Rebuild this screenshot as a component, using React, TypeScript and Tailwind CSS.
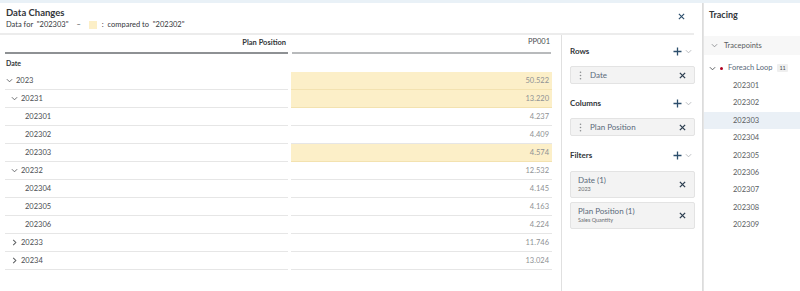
import React from "react";

const Chevron = ({ dir = "down", className = "" }: { dir?: "down" | "right"; className?: string }) => (
  <svg width="7" height="7" viewBox="0 0 8 8" className={className}>
    {dir === "down" ? (
      <path d="M1 2.5 L4 5.5 L7 2.5" fill="none" stroke="currentColor" strokeWidth="1" />
    ) : (
      <path d="M2.5 1 L5.5 4 L2.5 7" fill="none" stroke="currentColor" strokeWidth="1.2" />
    )}
  </svg>
);

const XIcon = ({ size = 7, w = 1.4 }: { size?: number; w?: number }) => (
  <svg width={size} height={size} viewBox="0 0 8 8">
    <path d="M1 1 L7 7 M7 1 L1 7" stroke="currentColor" strokeWidth={w} fill="none" />
  </svg>
);

const Plus = () => (
  <svg width="9" height="9" viewBox="0 0 9 9">
    <path d="M4.5 0.5 V8.5 M0.5 4.5 H8.5" stroke="currentColor" strokeWidth="1.3" fill="none" />
  </svg>
);

const Grip = () => (
  <svg width="3" height="9" viewBox="0 0 3 9">
    <circle cx="1.5" cy="1.2" r="0.8" fill="#8a8d90" />
    <circle cx="1.5" cy="4.5" r="0.8" fill="#8a8d90" />
    <circle cx="1.5" cy="7.8" r="0.8" fill="#8a8d90" />
  </svg>
);

type Row = { label: string; level: number; chev?: "down" | "right"; value: string; hl?: boolean };

const rows: Row[] = [
  { label: "2023", level: 0, chev: "down", value: "50.522", hl: true },
  { label: "20231", level: 1, chev: "down", value: "13.220", hl: true },
  { label: "202301", level: 2, value: "4.237" },
  { label: "202302", level: 2, value: "4.409" },
  { label: "202303", level: 2, value: "4.574", hl: true },
  { label: "20232", level: 1, chev: "down", value: "12.532" },
  { label: "202304", level: 2, value: "4.145" },
  { label: "202305", level: 2, value: "4.163" },
  { label: "202306", level: 2, value: "4.224" },
  { label: "20233", level: 1, chev: "right", value: "11.746" },
  { label: "20234", level: 1, chev: "right", value: "13.024" },
];

const SectionHeader = ({ title }: { title: string }) => (
  <div className="flex items-center h-[18px]">
    <span className="font-bold text-[8px] text-[#32363a]">{title}</span>
    <div className="ml-auto flex items-center gap-[3px] text-[#2c4e6c] mr-[3px]">
      <Plus />
      <span className="text-[#b0b4b8]">
        <Chevron />
      </span>
    </div>
  </div>
);

const Chip = ({ title, sub, grip }: { title: string; sub?: string; grip?: boolean }) => (
  <div
    className={`flex items-center bg-[#f3f3f3] border border-[#e3e3e3] rounded-[2px] pl-[7px] pr-[8px] ${
      sub ? "h-[27px]" : "h-[18px]"
    }`}
  >
    {grip && (
      <span className="mr-[8px] ml-[1px] flex">
        <Grip />
      </span>
    )}
    <div className="flex flex-col leading-none">
      <span className="text-[8px] text-[#5a6a7a]">{title}</span>
      {sub && <span className="text-[5.5px] text-[#6a6d70] mt-[3px]">{sub}</span>}
    </div>
    <span className="ml-auto text-[#2c3e50] flex">
      <XIcon size={7} w={1.5} />
    </span>
  </div>
);

const traceItems = ["202301", "202302", "202303", "202304", "202305", "202306", "202307", "202308", "202309"];

export default function App() {
  return (
    <div
      className="w-[800px] h-[291px] overflow-hidden bg-white flex flex-col text-[#32363a]"
      style={{ fontFamily: "Lato, 'Open Sans', sans-serif" }}
    >
      <div className="h-[3px] bg-[#e9f1f7] shrink-0" />
      <div className="flex flex-1 min-h-0">
        {/* Dialog */}
        <div className="w-[703px] shrink-0 flex flex-col border-r border-[#dcdcdc]">
          <div className="h-[30px] shrink-0 flex items-start pl-[6px] pr-[17px] relative">
            <div className="flex flex-col pt-[4px]">
              <span className="font-bold text-[9.5px] leading-[11px] text-[#32363a]">Data Changes</span>
              <div className="flex items-center text-[7.5px] leading-[10px] mt-[2px] text-[#32363a]">
                <span>Data for&nbsp; "202303"</span>
                <span className="mx-[8px]">–</span>
                <span className="w-[8px] h-[8px] bg-[#fcefc7] inline-block" />
                <span className="ml-[5px]">:&nbsp; compared to&nbsp; "202302"</span>
              </div>
            </div>
            <span className="ml-auto mt-[10px] text-[#2c4e6c] flex">
              <XIcon size={7} w={1.3} />
            </span>
          </div>
          <div className="h-[2px] bg-[#ececec] mr-[8px] shrink-0" />
          <div className="flex flex-1 min-h-0">
            {/* table */}
            <div className="w-[561px] shrink-0 flex flex-col">
              <div className="flex h-[19px] mt-[0px]">
                <div className="ml-[5px] w-[283px] flex items-end justify-end pb-[1px] border-b-2 border-[#8e9194]">
                  <span className="font-bold text-[7.5px] pb-[3px] pr-[2px]">Plan Position</span>
                </div>
                <div className="ml-[4px] w-[259px] flex justify-end border-b-2 border-[#b8babc]">
                  <span className="text-[7.5px] text-[#4a4d50] pt-[1px] pr-[1px]">PP001</span>
                </div>
              </div>
              <div className="h-[18px] flex items-center pl-[6px]">
                <span className="font-bold text-[7px]">Date</span>
              </div>
              {rows.map((r) => (
                <div key={r.label} className="flex h-[18px]">
                  <div className="ml-[5px] w-[283px] border-b border-[#e6e6e6] flex items-center">
                    <div
                      className="flex items-center"
                      style={{ paddingLeft: r.level === 0 ? 1 : r.level === 1 ? 6 : 20 }}
                    >
                      {r.chev && (
                        <span className="text-[#5a5d60] flex mr-[3px]">
                          <Chevron dir={r.chev} />
                        </span>
                      )}
                      <span className="text-[7.5px] text-[#4a4d50]">{r.label}</span>
                    </div>
                  </div>
                  <div
                    className={`ml-[3px] w-[261px] border-b flex items-center justify-end pr-[3px] ${
                      r.hl ? "bg-[#fcefc8] border-[#f3e2b0]" : "border-[#e6e6e6]"
                    }`}
                  >
                    <span className="text-[7.5px] text-[#8e9194]">{r.value}</span>
                  </div>
                </div>
              ))}
            </div>
            {/* builder panel */}
            <div className="w-[134px] shrink-0 border-l border-[#e0e0e0] pl-[8px] pt-[7px] flex flex-col">
              <SectionHeader title="Rows" />
              <div className="mt-[6px]">
                <Chip title="Date" grip />
              </div>
              <div className="mt-[10px]">
                <SectionHeader title="Columns" />
              </div>
              <div className="mt-[6px]">
                <Chip title="Plan Position" grip />
              </div>
              <div className="mt-[10px]">
                <SectionHeader title="Filters" />
              </div>
              <div className="mt-[7px] flex flex-col gap-[4px]">
                <Chip title="Date (1)" sub="2023" />
                <Chip title="Plan Position (1)" sub="Sales Quantity" />
              </div>
            </div>
          </div>
        </div>
        {/* Tracing */}
        <div className="flex-1 flex flex-col border-l border-[#e4e4e4]">
          <div className="h-[31px] pl-[5px] pt-[6px] flex items-start">
            <span className="font-bold text-[9px] leading-[12px] text-[#32363a]">Tracing</span>
          </div>
          <div className="h-[19px] bg-[#f7f7f7] flex items-center pl-[7px] mt-[2px]">
            <span className="text-[#8a8d90] flex mr-[6px]">
              <Chevron />
            </span>
            <span className="text-[7.5px] text-[#5a5d60]">Tracepoints</span>
          </div>
          <div className="h-[18px] flex items-center pl-[5px] mt-[4px]">
            <span className="text-[#4a4d50] flex mr-[4px]">
              <Chevron />
            </span>
            <span className="w-[3px] h-[3px] rounded-full bg-[#b00020] mr-[5px]" />
            <span className="text-[7.5px] text-[#5a6a7a]">Foreach Loop</span>
            <span className="ml-[5px] bg-[#efefef] text-[5.5px] px-[2px] rounded-[1px] text-[#4a4d50]">11</span>
          </div>
          {traceItems.map((t) => (
            <div
              key={t}
              className={`h-[17.4px] flex items-center pl-[29px] ${t === "202303" ? "bg-[#eaf0f6]" : ""}`}
            >
              <span className="text-[7.5px] text-[#5a5d60]">{t}</span>
            </div>
          ))}
        </div>
      </div>
    </div>
  );
}
